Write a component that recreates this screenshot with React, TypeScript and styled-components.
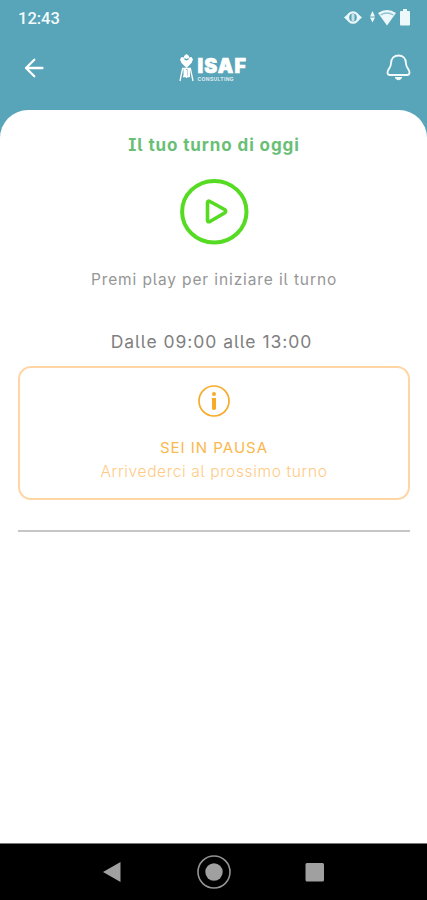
import React from "react";
import styled, { createGlobalStyle } from "styled-components";

const Global = createGlobalStyle`
  * { box-sizing: border-box; }
  body { margin: 0; background: #58a4b9; }
`;

const Screen = styled.div`
  display: flex;
  flex-direction: column;
  width: 427px;
  height: 900px;
  overflow: hidden;
  background: #58a4b9;
  font-family: Inter, sans-serif;
`;

const StatusBar = styled.div`
  display: flex;
  align-items: center;
  justify-content: space-between;
  height: 36px;
  padding: 0 15px 0 18px;
  color: #f4fbfd;
`;

const Clock = styled.span`
  padding-top: 2px;
  font: 500 16.5px/20px Roboto, sans-serif;
`;

const Header = styled.header`
  display: grid;
  grid-template-columns: 60px 1fr 60px;
  align-items: center;
  height: 74px;
  padding: 0 14px 10px 20px;
`;

const IconButton = styled.button<{ $end?: boolean }>`
  display: flex;
  justify-content: ${(p) => (p.$end ? "flex-end" : "flex-start")};
  padding: 0;
  border: 0;
  background: none;
`;

const Logo = styled.div`
  display: flex;
  justify-content: center;
  align-items: flex-start;
  gap: 4px;
  height: 28px;
  margin-left: -6px;
  color: #fff;
`;

const LogoWords = styled.div`
  display: flex;
  flex-direction: column;
  width: 51px;
`;

const LogoName = styled.span`
  padding-top: 3px;
  font: 900 19.5px/18px Inter, sans-serif;
  -webkit-text-stroke: 0.7px #fff;
  letter-spacing: 1.1px;
`;

const LogoSub = styled.span`
  padding-top: 2px;
  font: 700 5px/5px Inter, sans-serif;
  letter-spacing: 0.35px;
  opacity: 0.8;
`;

const Sheet = styled.main`
  display: flex;
  flex-direction: column;
  flex: 1;
  align-items: center;
  padding: 0 17px 0 18px;
  border-radius: 28px 28px 0 0;
  background: #fff;
`;

const Line = styled.p<{ $size: number; $color: string; $spacing: number; $weight?: number; $top?: number }>`
  margin: ${(p) => p.$top ?? 0}px 0 0;
  font-size: ${(p) => p.$size}px;
  font-weight: ${(p) => p.$weight ?? 400};
  font-feature-settings: "cv05";
  line-height: 24px;
  letter-spacing: ${(p) => p.$spacing}px;
  color: ${(p) => p.$color};
  white-space: nowrap;
`;

const Title = styled(Line)`
  font-feature-settings: "cv08", "cv05";
`;

const ShiftHours = styled(Line)`
  padding-right: 5px;
`;

const PlayButton = styled.button`
  display: flex;
  margin: 21px 0 0;
  padding: 0;
  border: 0;
  background: none;
`;

const PauseCard = styled.section`
  display: flex;
  flex-direction: column;
  align-items: center;
  align-self: stretch;
  height: 134px;
  margin-top: 12px;
  padding-top: 17px;
  border: 2px solid #ffd6a3;
  border-radius: 13px;
`;

const Divider = styled.hr`
  align-self: stretch;
  height: 1.5px;
  margin: 30px 0 0;
  border: 0;
  background: #c6c6c6;
`;

const NavBar = styled.nav`
  display: flex;
  justify-content: center;
  height: 57px;
  border-top: 1px solid #777;
  background: #000;
`;

export default function App() {
  return (
    <Screen>
      <Global />
      <StatusBar>
        <Clock>12:43</Clock>
        <svg width="68" height="20" viewBox="344 8 68 20" fill="#edf8fb">
          <path d="M344 17.500l4.500-4v8zM362 17.500l-4.500-4v8z" />
          <ellipse cx="353" cy="17.500" rx="5" ry="5.200" fill="none" stroke="#edf8fb" strokeWidth="2.300" />
          <rect x="351.500" y="14" width="3" height="7" rx="1" opacity="0.75" />
          <path d="M370 16.500l2.500-5.500 2.500 5.500zM370 17.500h5l-2.500 5z" />
          <path d="M378 13q9-6 18 0l-9 12.500z" />
          <path d="M380.500 15q6.500-4 13 0" fill="none" stroke="#8fc3d1" strokeWidth="1.300" />
          <path d="M400 12q0-1 1-1h2v-2h4v2h2q1 0 1 1v12.500q0 1-1 1h-8q-1 0-1-1z" />
        </svg>
      </StatusBar>
      <Header>
        <IconButton aria-label="Indietro">
          <svg width="28" height="28" viewBox="20 54 28 28" fill="none" stroke="#fff" strokeWidth="2.300" strokeLinecap="round" strokeLinejoin="round">
            <path d="M42.500 68H26M34.300 59.800L26 68l8.300 8.200" />
          </svg>
        </IconButton>
        <Logo>
          <svg width="15" height="28" viewBox="0 0 15 28" fill="none" stroke="#fff" strokeWidth="1.300">
            <path d="M5 2l2.500-2L10 2v1.500l2.500-.5 1.500 2.500-1.500 3.500-5 5-5-5L1 5.500 2.500 3l2.500.5z" fill="#fff" stroke="none" />
            <path d="M5.500 4.500q2 2.500 4 0" stroke="#58a4b9" />
            <path d="M3 14.500h9M3.500 15L1 27M11.500 15L14 27M4 22.500h7M7.500 16v8" />
            <path d="M4.500 15H7v8H4.500zM8.500 15H11v8H8.500z" fill="#fff" stroke="none" />
          </svg>
          <LogoWords>
            <LogoName>ISAF</LogoName>
            <LogoSub>CONSULTING</LogoSub>
          </LogoWords>
        </Logo>
        <IconButton $end aria-label="Notifiche">
          <svg width="28" height="30" viewBox="385 53 28 30" fill="none" stroke="#f4fbfd" strokeWidth="1.800" strokeLinejoin="round">
            <path d="M391 63.500C391 58 394.500 55.500 398.500 55.500S406 58 406 63.500C406 68 409.500 69 409.500 72.500Q409.500 75 407 75H390Q387.500 75 387.500 72.500C387.500 69 391 68 391 63.500z" />
            <path d="M395 77.500q3.500 4.500 7 0z" fill="#f4fbfd" strokeWidth="1" />
          </svg>
        </IconButton>
      </Header>
      <Sheet>
        <Title as="h1" $size={17} $weight={700} $spacing={0.9} $color="#6abf76" $top={23}>Il tuo turno di oggi</Title>
        <PlayButton aria-label="Play">
          <svg width="70" height="68" viewBox="179 178 70 68" fill="none" stroke="#55dc22" strokeWidth="4">
            <ellipse cx="214.300" cy="211.700" rx="32.200" ry="30.800" />
            <path d="M207.500 203Q207.500 200.300 210 201.500L224.500 209.500Q227 211.300 224.500 213L210 221.500Q207.500 222.500 207.500 220z" strokeWidth="3.600" />
          </svg>
        </PlayButton>
        <Line $size={15.5} $spacing={0.88} $color="#969696" $top={22}>Premi play per iniziare il turno</Line>
        <ShiftHours $size={17.5} $spacing={0.97} $color="#808080" $top={38}>Dalle 09:00 alle 13:00</ShiftHours>
        <PauseCard>
          <svg width="34" height="34" viewBox="0 0 34 34" fill="#f7ab28">
            <circle cx="17" cy="16" r="15" fill="none" stroke="#f7ab28" strokeWidth="1.700" />
            <circle cx="17" cy="9" r="2" />
            <path d="M14.500 13h4.500v11q-2 2-4 0v-9.500z" />
          </svg>
          <Line $size={15} $spacing={1} $color="#fab84d" $top={17}>SEI IN PAUSA</Line>
          <Line $size={15.5} $spacing={0.65} $weight={300} $color="#ffca83">Arrivederci al prossimo turno</Line>
        </PauseCard>
        <Divider />
      </Sheet>
      <NavBar>
        <svg width="427" height="56" viewBox="0 844 427 56" fill="#a0a0a0">
          <path d="M103 872l17.500-10v20z" />
          <circle cx="214" cy="872" r="16" fill="none" stroke="#949494" strokeWidth="1.600" />
          <circle cx="214" cy="872" r="8.700" />
          <rect x="305.500" y="863" width="18.500" height="18.500" rx="1.500" />
        </svg>
      </NavBar>
    </Screen>
  );
}
